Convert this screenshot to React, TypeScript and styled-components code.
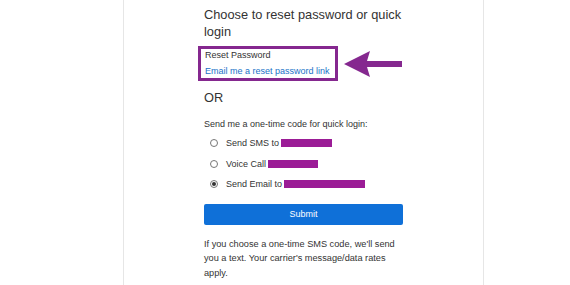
import React, { useState } from "react";
import styled, { createGlobalStyle } from "styled-components";

const Global = createGlobalStyle`
  html, body { margin: 0; padding: 0; background: #fff; }
  body { font-family: "Liberation Sans", Arial, sans-serif; color: #333; }
`;

const Card = styled.div`
  margin-left: 123px;
  width: 361px;
  min-height: 100vh;
  border-left: 1px solid #e6e6e6;
  border-right: 1px solid #e6e6e6;
  padding: 6px 0 0 80px;
  box-sizing: border-box;
`;

const Column = styled.div`
  width: 200px;
  display: flex;
  flex-direction: column;
`;

const Heading = styled.h2`
  margin: 0;
  font-size: 12.8px;
  line-height: 17px;
  font-weight: normal;
  color: #333;
`;

const HighlightRow = styled.div`
  display: flex;
  align-items: center;
  gap: 6px;
  margin: 6px 0 0 -6px;
`;

const HighlightBox = styled.div`
  border: 3px solid #85288f;
  padding: 0 5px 1px 4px;
  display: flex;
  flex-direction: column;
  gap: 4px;
`;

const Label = styled.div`
  font-size: 9px;
  line-height: 12px;
  color: #333;
`;

const Link = styled.a`
  font-size: 9px;
  line-height: 12px;
  color: #1a73c8;
  text-decoration: none;
  white-space: nowrap;
`;

const Or = styled(Heading)`
  margin-top: 8px;
`;

const Prompt = styled.p`
  margin: 12px 0 3px;
  font-size: 9px;
  line-height: 12px;
`;

const Option = styled.label`
  display: flex;
  align-items: center;
  height: 20.5px;
  padding-left: 6px;
  font-size: 9px;
  cursor: pointer;
`;

const Radio = styled.span<{ $checked: boolean }>`
  width: 8px;
  height: 8px;
  border-radius: 50%;
  border: 1px solid #767676;
  box-sizing: border-box;
  margin-right: 8px;
  display: flex;
  align-items: center;
  justify-content: center;
  &::after {
    content: "";
    width: 4px;
    height: 4px;
    border-radius: 50%;
    background: ${(p) => (p.$checked ? "#333" : "transparent")};
  }
`;

const Redacted = styled.span<{ $w: number }>`
  display: inline-block;
  width: ${(p) => p.$w}px;
  height: 8px;
  margin-left: 2px;
  background: #9b1c96;
`;

const Submit = styled.button`
  margin-top: 9px;
  height: 21px;
  width: 199px;
  border: none;
  border-radius: 2px;
  background: #0f70d8;
  color: #fff;
  font-family: inherit;
  font-size: 9px;
  cursor: pointer;
`;

const Note = styled.p`
  margin: 12px 0 0;
  font-size: 9.2px;
  line-height: 14.5px;
  color: #333;
`;

const Arrow = () => (
  <svg width="58" height="26" viewBox="0 0 58 26">
    <polygon points="0,13 26,0 23,10 58,10 58,16 23,16 26,26" fill="#85288f" />
  </svg>
);

const options = [
  { id: "sms", text: "Send SMS to", w: 51 },
  { id: "voice", text: "Voice Call", w: 50 },
  { id: "email", text: "Send Email to", w: 81 },
];

export default function App() {
  const [choice, setChoice] = useState("email");
  return (
    <>
      <Global />
      <Card>
        <Column>
          <Heading>Choose to reset password or quick login</Heading>
          <HighlightRow>
            <HighlightBox>
              <Label>Reset Password</Label>
              <Link href="#">Email me a reset password link</Link>
            </HighlightBox>
            <Arrow />
          </HighlightRow>
          <Or>OR</Or>
          <Prompt>Send me a one-time code for quick login:</Prompt>
          {options.map((o) => (
            <Option key={o.id} onClick={() => setChoice(o.id)}>
              <Radio $checked={choice === o.id} />
              {o.text}
              <Redacted $w={o.w} />
            </Option>
          ))}
          <Submit>Submit</Submit>
          <Note>
            If you choose a one-time SMS code, we'll send you a text. Your
            carrier's message/data rates apply.
          </Note>
        </Column>
      </Card>
    </>
  );
}
